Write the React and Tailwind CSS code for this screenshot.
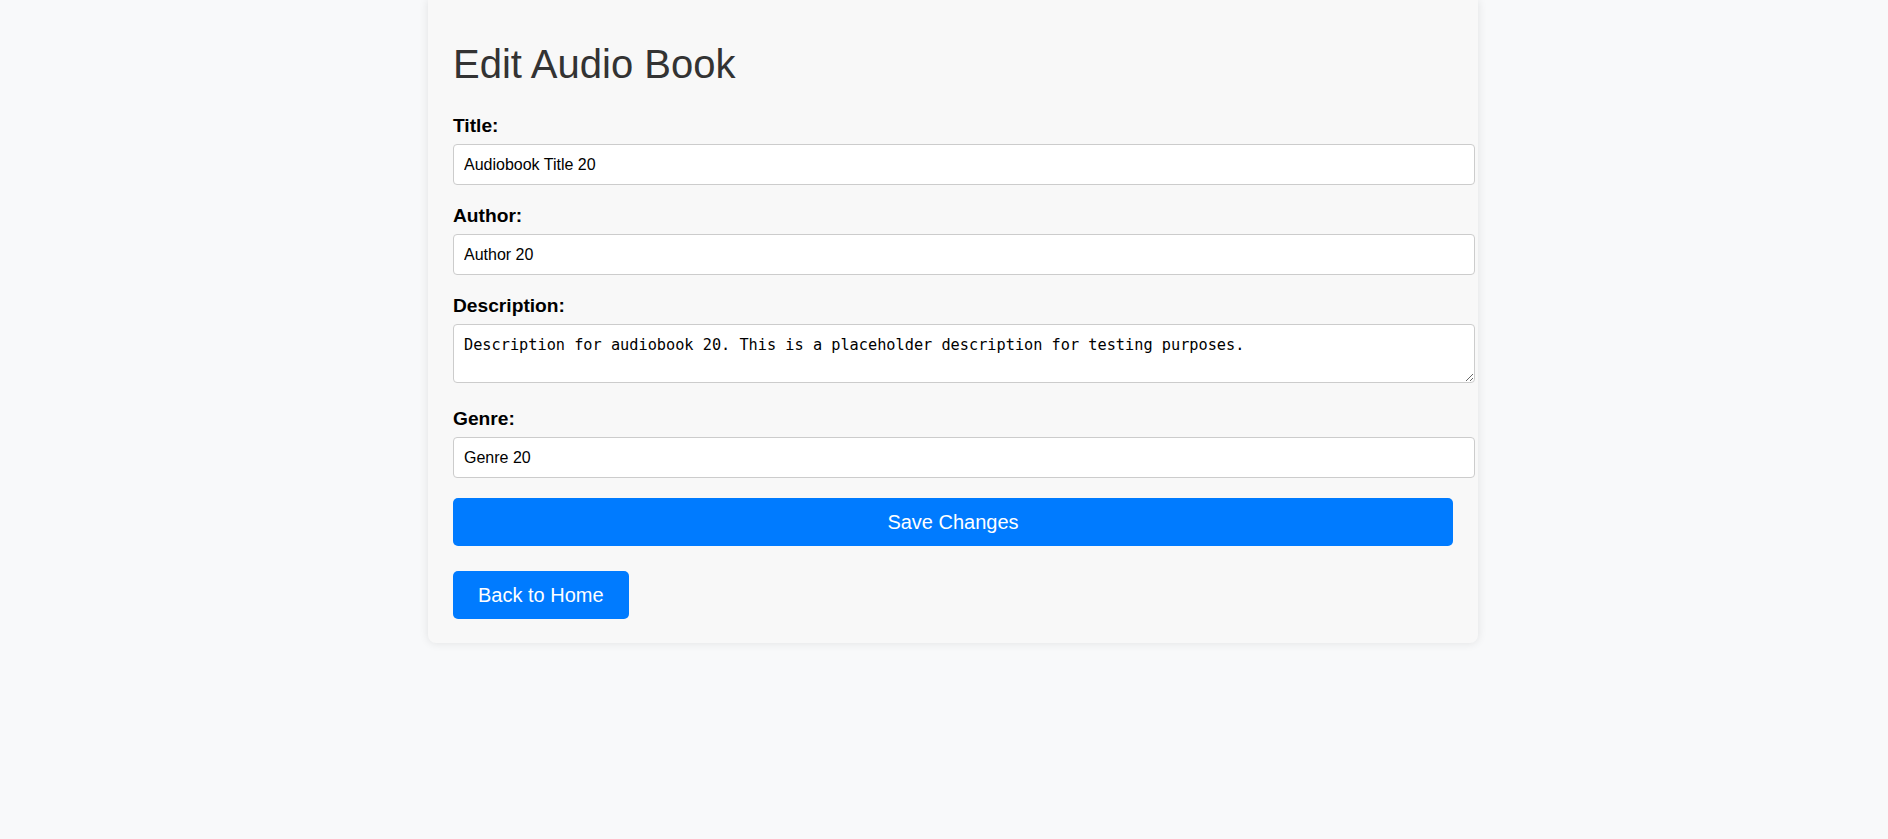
export default function App() {
  const inputCls =
    "block w-[1022px] h-[41px] px-[10px] border border-[#cccccc] rounded-[4px] bg-white text-[16px] text-black outline-none";
  const labelCls = "block text-[19.2px] leading-[22px] font-bold text-black mb-[7px]";
  return (
    <div
      className="min-h-screen bg-[#f8f9fa] flex justify-center pl-[18px]"
      style={{ fontFamily: '"Liberation Sans", Arial, sans-serif' }}
    >
      <div className="w-[1050px] self-start bg-[#f8f8f8] px-[25px] pt-[41px] pb-[24px] rounded-b-[8px] shadow-[0_0_10px_rgba(0,0,0,0.1)]">
        <h1 className="text-[40px] leading-[46px] font-normal text-[#333333] mb-[28px]">
          Edit Audio Book
        </h1>
        <form onSubmit={(e) => e.preventDefault()}>
          <label className={labelCls}>Title:</label>
          <input className={inputCls} defaultValue="Audiobook Title 20" />
          <div className="h-[20px]" />
          <label className={labelCls}>Author:</label>
          <input className={inputCls} defaultValue="Author 20" />
          <div className="h-[20px]" />
          <label className={labelCls}>Description:</label>
          <textarea
            className="block w-[1022px] h-[59px] px-[10px] pt-[11px] pb-[7px] border border-[#cccccc] rounded-[4px] bg-white text-[15.25px] leading-[18px] text-black outline-none"
            style={{ fontFamily: '"DejaVu Sans Mono", "Liberation Mono", monospace' }}
            defaultValue="Description for audiobook 20. This is a placeholder description for testing purposes."
          />
          <div className="h-[25px]" />
          <label className={labelCls}>Genre:</label>
          <input className={inputCls} defaultValue="Genre 20" />
          <div className="h-[20px]" />
          <button
            type="submit"
            className="block w-full h-[48px] bg-[#007bff] text-white text-[20px] leading-[46px] rounded-[5px]"
          >
            Save Changes
          </button>
        </form>
        <div className="h-[25px]" />
        <button className="block h-[48px] px-[25px] bg-[#007bff] text-white text-[20px] rounded-[5px]">
          Back to Home
        </button>
      </div>
    </div>
  );
}
